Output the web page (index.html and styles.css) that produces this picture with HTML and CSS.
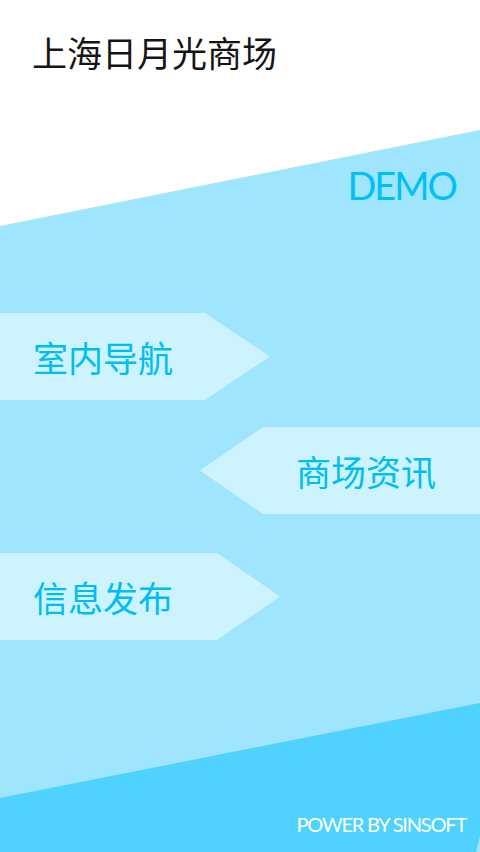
FILE: index.html
```html
<!DOCTYPE html>
<html lang="zh-CN">
<head>
<meta charset="utf-8">
<title>上海日月光商场</title>
<link rel="stylesheet" href="styles.css">
</head>
<body>
<main class="screen">
  <h1 class="title">上海日月光商场</h1>
  <div class="demo">DEMO</div>
  <nav class="menu">
    <a class="banner banner-right first">室内导航</a>
    <a class="banner banner-left second">商场资讯</a>
    <a class="banner banner-right third">信息发布</a>
  </nav>
  <footer class="footer">POWER BY SINSOFT</footer>
</main>
</body>
</html>
```
FILE: styles.css
```css
html, body {
  margin: 0;
  padding: 0;
  background: #ffffff;
}

.screen {
  position: relative;
  width: 480px;
  height: 852px;
  overflow: hidden;
  display: flex;
  flex-direction: column;
  background: #ffffff;
  font-family: "Noto Sans CJK SC", "Noto Sans", sans-serif;
}

.screen::before {
  content: "";
  position: absolute;
  inset: 0;
  background: #9ee5fd;
  clip-path: polygon(0 226px, 480px 130px, 480px 852px, 0 852px);
  z-index: 0;
}

.screen::after {
  content: "";
  position: absolute;
  inset: 0;
  background: #4fd3fe;
  clip-path: polygon(0 798px, 480px 703px, 480px 836px, 476px 852px, 0 852px);
  z-index: 0;
}

.title,
.demo,
.menu,
.footer {
  position: relative;
  z-index: 1;
}

.title {
  margin: 0;
  padding: 34px 0 0 32px;
  font-size: 35px;
  line-height: 35px;
  font-weight: 400;
  color: #151515;
}

.demo {
  margin-top: 97px;
  padding-right: 24px;
  text-align: right;
  font-family: "Lato", "Liberation Sans", sans-serif;
  font-size: 38px;
  line-height: 38px;
  letter-spacing: -2px;
  color: #00c0f5;
}

.menu {
  display: flex;
  flex-direction: column;
}

.banner {
  display: flex;
  align-items: center;
  height: 87px;
  font-size: 35px;
  line-height: 35px;
  color: #00bdf2;
  background: #ccf3fe;
}

.banner-right {
  padding-left: 33px;
  box-sizing: border-box;
}

.first {
  margin-top: 109px;
  width: 270px;
  clip-path: polygon(0 0, 205px 0, 270px 50%, 205px 100%, 0 100%);
}

.second {
  margin-top: 27px;
  margin-left: 200px;
  width: 280px;
  box-sizing: border-box;
  justify-content: flex-end;
  padding-right: 44px;
  clip-path: polygon(0 50%, 63px 0, 100% 0, 100% 100%, 63px 100%);
}

.third {
  margin-top: 39px;
  width: 280px;
  clip-path: polygon(0 0, 217px 0, 280px 50%, 217px 100%, 0 100%);
}

.footer {
  margin-top: auto;
  padding: 0 14px 18px 0;
  text-align: right;
  font-family: "Lato", "Liberation Sans", sans-serif;
  font-size: 20px;
  line-height: 20px;
  letter-spacing: -1.2px;
  color: #ffffff;
}
```
